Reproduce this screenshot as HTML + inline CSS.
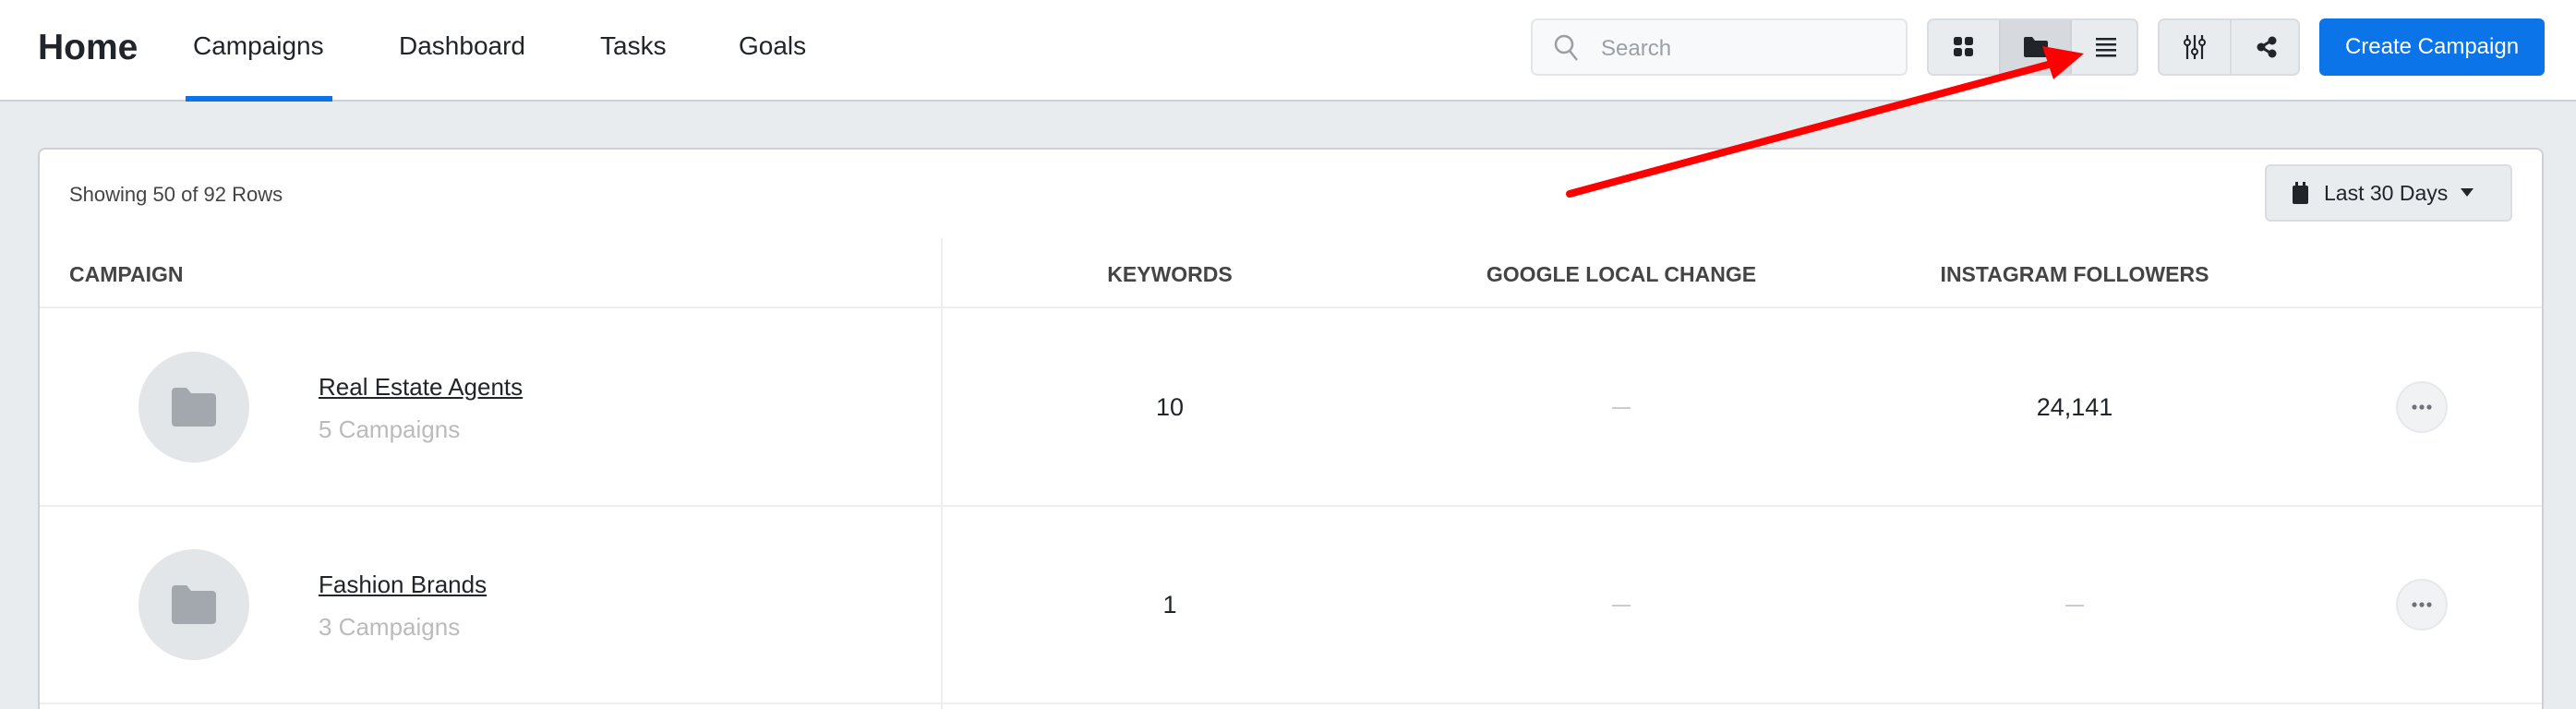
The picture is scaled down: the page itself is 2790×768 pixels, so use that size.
<!DOCTYPE html>
<html style="width:2790px;height:768px;overflow:hidden"><head><meta charset="utf-8"><style>
*{box-sizing:border-box;margin:0;padding:0}
body{width:2790px;height:768px;overflow:hidden;background:#e9ecef;font-family:"Liberation Sans",sans-serif;position:relative;color:#212529}
.nav{position:absolute;left:0;top:0;width:2790px;height:110px;background:#fff;border-bottom:2px solid #cdd1d6}
.abs{position:absolute}
.navt{position:absolute;top:34px;font-size:28px;color:#212529}
.btn{position:absolute;top:20px;height:62px;background:#e9ecef;border:2px solid #d9dde1;border-radius:7px;overflow:hidden}
.seg{position:absolute;top:0;height:100%;display:flex;align-items:center;justify-content:center}
.card{position:absolute;left:41px;top:160px;width:2714px;height:620px;background:#fff;border:2px solid #cdd1d6;border-radius:8px}
.th{position:absolute;top:284px;font-size:23px;font-weight:bold;color:#444;text-transform:uppercase}
.c{transform:translateX(-50%)}
.val{position:absolute;font-size:27px;color:#212529}
.dash{position:absolute;width:20px;height:2px;background:#c9ccd0}
</style></head><body>
<div class="nav">
<div class="abs" style="left:41px;top:30px;font-size:39px;font-weight:bold;color:#212529">Home</div>
<div class="navt" style="left:209px">Campaigns</div>
<div class="abs" style="left:201px;top:104px;width:159px;height:6px;background:#0b72e7"></div>
<div class="navt" style="left:432px">Dashboard</div>
<div class="navt" style="left:650px">Tasks</div>
<div class="navt" style="left:800px">Goals</div>
<div class="abs" style="left:1658px;top:20px;width:408px;height:62px;background:#f8f9fa;border:2px solid #e4e7ea;border-radius:7px">
<svg class="abs" style="left:22px;top:14px" width="30" height="34" viewBox="0 0 30 34"><circle cx="12" cy="12" r="9" fill="none" stroke="#9aa0a6" stroke-width="2.5"/><path d="M18 19l8 10" stroke="#9aa0a6" stroke-width="2.5"/></svg>
<div class="abs" style="left:74px;top:17px;font-size:24px;color:#9aa0a6">Search</div></div>
<div class="btn" style="left:2087px;width:229px">
<div class="seg" style="left:0;width:76px"><svg width="22" height="22"><rect x="0" y="0" width="9" height="9" rx="2.5" fill="#212529"/><rect x="12" y="0" width="9" height="9" rx="2.5" fill="#212529"/><rect x="0" y="12" width="9" height="9" rx="2.5" fill="#212529"/><rect x="12" y="12" width="9" height="9" rx="2.5" fill="#212529"/></svg></div>
<div class="seg" style="left:76px;width:79px;background:#d6dade;border-left:2px solid #cfd3d8;border-right:2px solid #cfd3d8"><svg width="26" height="22"><path d="M0 2a2 2 0 0 1 2-2h7l3 4h12a2 2 0 0 1 2 2v14a2 2 0 0 1-2 2H2a2 2 0 0 1-2-2z" fill="#212529"/></svg></div>
<div class="seg" style="left:155px;width:74px"><svg width="22" height="22"><rect y="1" width="22" height="2.5" fill="#212529"/><rect y="7" width="22" height="2.5" fill="#212529"/><rect y="13" width="22" height="2.5" fill="#212529"/><rect y="19" width="22" height="2.5" fill="#212529"/></svg></div>
</div>
<div class="btn" style="left:2337px;width:154px">
<div class="seg" style="left:0;width:78px;border-right:2px solid #d9dde1"><svg width="24" height="26" viewBox="0 0 24 26"><path d="M4 0v26M12 0v26M20 0v26" stroke="#212529" stroke-width="2.2"/><circle cx="4" cy="8" r="3" fill="#e9ecef" stroke="#212529" stroke-width="2"/><circle cx="12" cy="18" r="3" fill="#e9ecef" stroke="#212529" stroke-width="2"/><circle cx="20" cy="8" r="3" fill="#e9ecef" stroke="#212529" stroke-width="2"/></svg></div>
<div class="seg" style="left:78px;width:76px"><svg width="22" height="24"><path d="M16 5L5 12l11 7" stroke="#212529" stroke-width="3" fill="none"/><circle cx="17" cy="5" r="4.5" fill="#212529"/><circle cx="5" cy="12" r="4.5" fill="#212529"/><circle cx="17" cy="19" r="4.5" fill="#212529"/></svg></div>
</div>
<div class="abs" style="left:2512px;top:20px;width:244px;height:62px;background:#0b74e8;border-radius:6px;color:#fff;font-size:24px;display:flex;align-items:center;justify-content:center">Create Campaign</div>
</div>
<div class="card"></div>
<div class="abs" style="left:75px;top:198px;font-size:22px;color:#444">Showing 50 of 92 Rows</div>
<div class="abs" style="left:2453px;top:178px;width:268px;height:62px;background:#e9ecef;border:2px solid #d9dde1;border-radius:6px;display:flex;align-items:center;padding-left:28px;font-size:23px">
<svg width="17" height="24" style="margin-right:17px"><rect x="0" y="4" width="17" height="20" rx="2" fill="#212529"/><rect x="3" y="0" width="3" height="6" fill="#212529"/><rect x="11" y="0" width="3" height="6" fill="#212529"/></svg>Last 30 Days<svg width="14" height="10" style="margin-left:14px"><path d="M0 0h14L7 9z" fill="#212529"/></svg></div>
<div class="abs" style="left:1019px;top:258px;width:2px;height:510px;background:#eceef0"></div>
<div class="th" style="left:75px">Campaign</div>
<div class="th c" style="left:1267px">Keywords</div>
<div class="th c" style="left:1756px">Google Local Change</div>
<div class="th c" style="left:2247px">Instagram Followers</div>
<div class="abs" style="left:43px;top:332px;width:2710px;height:2px;background:#eceef0"></div>
<div class="abs" style="left:43px;top:547px;width:2710px;height:2px;background:#eceef0"></div>
<div class="abs" style="left:43px;top:761px;width:2710px;height:2px;background:#eceef0"></div>
<div class="abs" style="left:150px;top:381px;width:120px;height:120px;border-radius:50%;background:#e3e6e9;display:flex;align-items:center;justify-content:center"><svg width="48" height="42"><path d="M0 4a4 4 0 0 1 4-4h12l5 6h23a4 4 0 0 1 4 4v28a4 4 0 0 1-4 4H4a4 4 0 0 1-4-4z" fill="#a2a8ae"/></svg></div>
<div class="abs" style="left:345px;top:404px;font-size:26px;text-decoration:underline">Real Estate Agents</div>
<div class="abs" style="left:345px;top:450px;font-size:26px;color:#bbb">5 Campaigns</div>
<div class="val c" style="left:1267px;top:426px">10</div>
<div class="dash" style="left:1746px;top:441px"></div>
<div class="val c" style="left:2247px;top:426px">24,141</div>
<div class="abs" style="left:2595px;top:413px;width:56px;height:56px;border-radius:50%;background:#f1f2f4;border:2px solid #e6e8eb;display:flex;align-items:center;justify-content:center"><svg width="22" height="6"><circle cx="3" cy="3" r="2.6" fill="#6c737a"/><circle cx="11" cy="3" r="2.6" fill="#6c737a"/><circle cx="19" cy="3" r="2.6" fill="#6c737a"/></svg></div>
<div class="abs" style="left:150px;top:595px;width:120px;height:120px;border-radius:50%;background:#e3e6e9;display:flex;align-items:center;justify-content:center"><svg width="48" height="42"><path d="M0 4a4 4 0 0 1 4-4h12l5 6h23a4 4 0 0 1 4 4v28a4 4 0 0 1-4 4H4a4 4 0 0 1-4-4z" fill="#a2a8ae"/></svg></div>
<div class="abs" style="left:345px;top:618px;font-size:26px;text-decoration:underline">Fashion Brands</div>
<div class="abs" style="left:345px;top:664px;font-size:26px;color:#bbb">3 Campaigns</div>
<div class="val c" style="left:1267px;top:640px">1</div>
<div class="dash" style="left:1746px;top:655px"></div>
<div class="dash" style="left:2237px;top:655px"></div>
<div class="abs" style="left:2595px;top:627px;width:56px;height:56px;border-radius:50%;background:#f1f2f4;border:2px solid #e6e8eb;display:flex;align-items:center;justify-content:center"><svg width="22" height="6"><circle cx="3" cy="3" r="2.6" fill="#6c737a"/><circle cx="11" cy="3" r="2.6" fill="#6c737a"/><circle cx="19" cy="3" r="2.6" fill="#6c737a"/></svg></div>
<svg class="abs" style="left:0;top:0" width="2790" height="768"><path d="M1700 210L2222 69" stroke="#f00" stroke-width="8" stroke-linecap="round"/><path d="M2257 58L2212 50L2224 86z" fill="#f00"/></svg>
</body></html>
